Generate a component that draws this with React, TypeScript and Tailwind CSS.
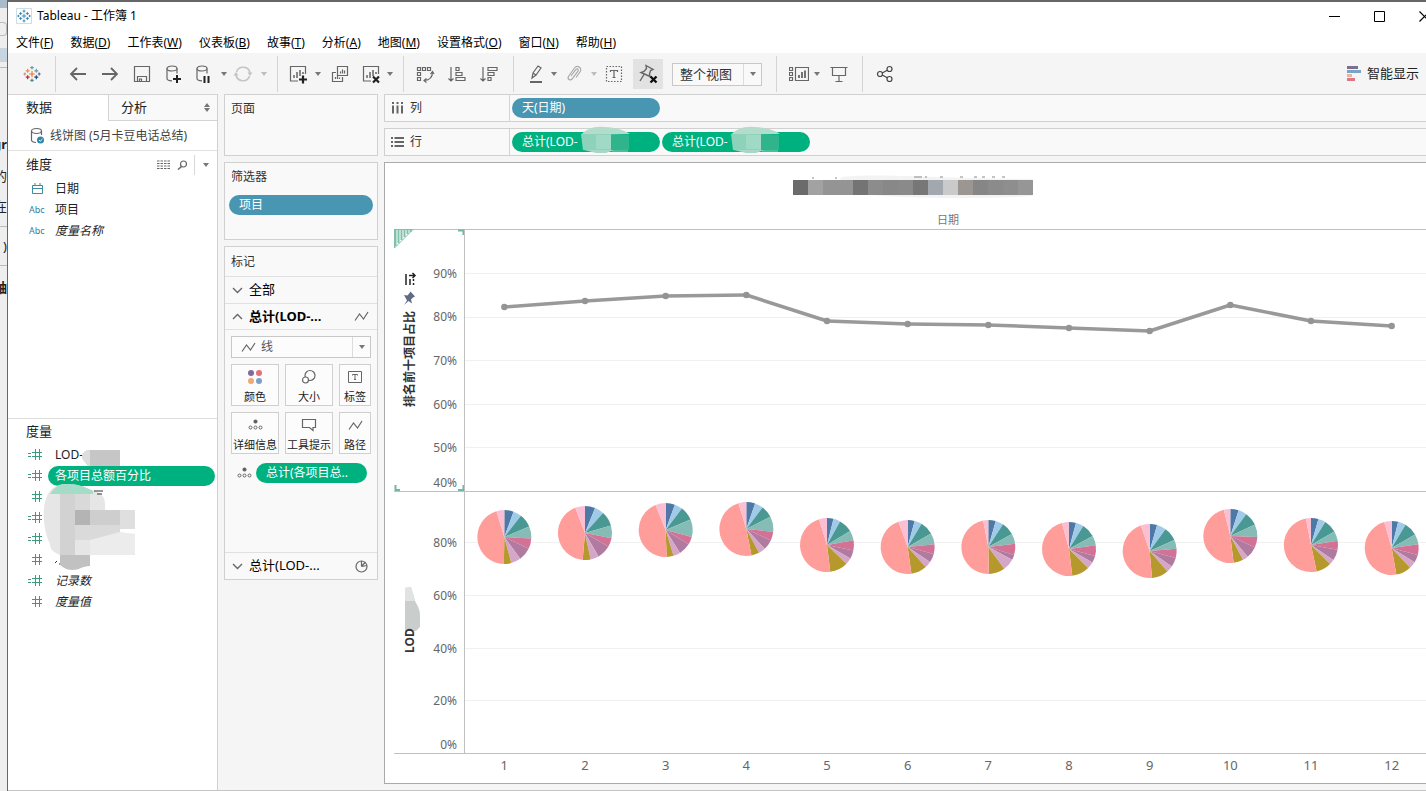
import React from "react";

const SLICE_COLORS = [
  "#4e79a7",
  "#a0cbe8",
  "#499894",
  "#86bcb6",
  "#d37295",
  "#b07aa1",
  "#d4a6c8",
  "#b6992d",
  "#ff9d9a",
  "#fabfd2",
];

const MONTHS = [
  { line: 78, pie: 308, cuts: [20, 38, 67, 93, 116, 144, 165, 181, 343] },
  { line: 72, pie: 304, cuts: [22, 42, 74, 101, 120, 150, 168, 185, 339] },
  { line: 67, pie: 301, cuts: [20, 37, 67, 105, 122, 148, 163, 178, 338] },
  { line: 66, pie: 300, cuts: [19, 37, 63, 96, 115, 137, 152, 169, 343] },
  { line: 92, pie: 316, cuts: [14, 29, 59, 80, 102, 120, 134, 173, 343] },
  { line: 95, pie: 318, cuts: [15, 31, 60, 84, 105, 124, 138, 172, 340] },
  { line: 96, pie: 318, cuts: [16, 33, 61, 83, 107, 118, 144, 179, 349] },
  { line: 99, pie: 320, cuts: [15, 32, 61, 82, 105, 120, 135, 173, 345] },
  { line: 102, pie: 322, cuts: [16, 36, 66, 85, 105, 125, 139, 175, 341] },
  { line: 76, pie: 307, cuts: [18, 36, 65, 92, 115, 140, 152, 173, 346] },
  { line: 92, pie: 316, cuts: [16, 32, 60, 81, 100, 124, 135, 168, 349] },
  { line: 97, pie: 319, cuts: [14, 31, 60, 82, 105, 122, 137, 170, 344] },
];

const UPPER_TICKS = [
  { label: "90%", line: 44, text: 49 },
  { label: "80%", line: 88, text: 92 },
  { label: "70%", line: 131, text: 136 },
  { label: "60%", line: 175, text: 180 },
  { label: "50%", line: 218, text: 223 },
  { label: "40%", line: null, text: 258 },
];

const LOWER_TICKS = [
  { label: "80%", line: 313, text: 318 },
  { label: "60%", line: 366, text: 371 },
  { label: "40%", line: 419, text: 424 },
  { label: "20%", line: 471, text: 476 },
  { label: "0%", line: null, text: 520 },
];

const TICKS = [...UPPER_TICKS, ...LOWER_TICKS];

function columnCenter(i: number) {
  return `${((i + 0.5) / MONTHS.length) * 100}%`;
}

function slicePath(from: number, to: number, r: number) {
  const point = (deg: number) => {
    const a = (deg * Math.PI) / 180;
    return `${(Math.sin(a) * r).toFixed(2)} ${(-Math.cos(a) * r).toFixed(2)}`;
  };
  return `M0 0L${point(from)}A${r} ${r} 0 ${to - from > 180 ? 1 : 0} 1 ${point(to)}Z`;
}

function Pie({ cuts }: { cuts: number[] }) {
  const stops = [0, ...cuts, 360];
  return (
    <g>
      {SLICE_COLORS.map((color, i) => (
        <path key={color} d={slicePath(stops[i], stops[i + 1], 27)} fill={color} />
      ))}
    </g>
  );
}

type IconProps = { w?: number; h?: number; color?: string; children: React.ReactNode };

function Icon({ w = 20, h = 20, color = "#666", children }: IconProps) {
  return (
    <svg
      width={w}
      height={h}
      viewBox={`0 0 ${w} ${h}`}
      fill="none"
      stroke={color}
      strokeWidth="1.2"
      className="shrink-0"
      aria-hidden="true"
    >
      {children}
    </svg>
  );
}

function Caret({ light = false }: { light?: boolean }) {
  return (
    <svg width="6" height="4" viewBox="0 0 6 4" aria-hidden="true">
      <path d="M0 0h6L3 4z" fill={light ? "#bdbdbd" : "#777"} />
    </svg>
  );
}

const LOGO_CROSSES = [
  [10, 10, 3.2, "#e8762c"],
  [5.2, 6.5, 2.2, "#eb912c"],
  [14.8, 6.5, 2.2, "#7099a5"],
  [5.2, 13.5, 2.2, "#c72035"],
  [14.8, 13.5, 2.2, "#1f447e"],
  [10, 3, 2, "#7099a5"],
  [10, 17, 2, "#5b879b"],
  [2, 10, 1.6, "#c98aa0"],
  [18, 10, 1.6, "#5b6591"],
] as const;

function TableauLogo({ size, tint }: { size: number; tint?: string }) {
  return (
    <svg width={size} height={size} viewBox="0 0 20 20" aria-hidden="true">
      {LOGO_CROSSES.map(([x, y, r, c], i) => (
        <path key={i} d={`M${x - r} ${y}h${r * 2}M${x} ${y - r}v${r * 2}`} stroke={tint ?? c} strokeWidth="1.3" />
      ))}
    </svg>
  );
}

function ToolButton({ label, className = "w-8", children }: { label: string; className?: string; children: React.ReactNode }) {
  return (
    <button type="button" aria-label={label} className={`flex h-[30px] shrink-0 items-center justify-center ${className}`}>
      {children}
    </button>
  );
}

function Group({ className, children }: { className: string; children: React.ReactNode }) {
  return <div className={`flex h-9 shrink-0 items-center border-r border-[#d4d4d4] ${className}`}>{children}</div>;
}

const SHEET = (
  <>
    <path d="M10 17H2.500V2.500h15V10" />
    <path d="M6 14v-3M9 14V8M12 12V6M15 10V8" strokeWidth="1.500" />
  </>
);

const DATABASE = (
  <>
    <ellipse cx="8" cy="4.500" rx="5" ry="2.500" />
    <path d="M3 4.500v10c0 1.400 2 2.200 5 2.300M13 4.500v5" />
  </>
);

function Toolbar() {
  return (
    <div className="flex h-[42px] items-center bg-[#f5f5f5]">
      <Group className="w-12 justify-center">
        <ToolButton label="Tableau">
          <TableauLogo size={18} />
        </ToolButton>
      </Group>
      <Group className="pr-[5px] pl-1.5">
        <ToolButton label="后退">
          <Icon>
            <path d="M18 10H3M9 4l-6 6 6 6" strokeWidth="1.800" />
          </Icon>
        </ToolButton>
        <ToolButton label="前进">
          <Icon>
            <path d="M2 10h15M11 4l6 6-6 6" strokeWidth="1.800" />
          </Icon>
        </ToolButton>
        <ToolButton label="保存">
          <Icon>
            <path d="M2.500 2.500h15v15h-15zM5.500 17.500v-5h9v5M7.500 17v-2h2v2" />
          </Icon>
        </ToolButton>
        <ToolButton label="新建数据源">
          <Icon>
            {DATABASE}
            <path d="M9 15h8M13 11v8" stroke="#222" strokeWidth="2" />
          </Icon>
        </ToolButton>
        <ToolButton label="暂停自动更新" className="w-7">
          <Icon>
            {DATABASE}
            <path d="M10.500 12v7M14.500 12v7" stroke="#222" strokeWidth="2" />
          </Icon>
        </ToolButton>
        <ToolButton label="更新选项" className="w-3">
          <Caret />
        </ToolButton>
        <ToolButton label="运行更新" className="w-[26px]">
          <Icon color="#c4c4c4">
            <path d="M3.500 8A7 7 0 0 1 17 9M16.500 12A7 7 0 0 1 3 11" strokeWidth="1.600" />
            <path d="M14.500 8.500h5L17 12zM.5 11.500h5L3 8z" fill="#c4c4c4" stroke="none" />
          </Icon>
        </ToolButton>
        <ToolButton label="运行选项" className="w-4">
          <Caret light />
        </ToolButton>
      </Group>
      <Group className="pr-[7px] pl-1">
        <ToolButton label="新建工作表">
          <Icon>
            {SHEET}
            <path d="M11 15.500h8M15 11.500v8" stroke="#222" strokeWidth="2.200" />
          </Icon>
        </ToolButton>
        <ToolButton label="新建选项" className="w-2">
          <Caret />
        </ToolButton>
        <ToolButton label="复制" className="w-9">
          <Icon>
            <path d="M7.500 2.500h10v9h-10zM6 8.500H2.500v9h10V13" />
            <path d="M10.500 9.500v-2M12.500 9.500v-4M14.500 9.500v-3M5.500 15v-2M7.500 15v-3M9.500 15v-1.500" />
          </Icon>
        </ToolButton>
        <ToolButton label="清除工作表" className="w-[26px]">
          <Icon>
            {SHEET}
            <path d="M12 12.500l6 6M18 12.500l-6 6" stroke="#222" strokeWidth="2.200" />
          </Icon>
        </ToolButton>
        <ToolButton label="清除选项" className="w-3">
          <Caret />
        </ToolButton>
      </Group>
      <Group className="pr-2 pl-[5px]">
        <ToolButton label="交换行和列">
          <Icon>
            <path d="M2.500 3.500h3v3h-3zM7.500 3.500h3v3h-3zM12.500 3.500h3v3h-3zM2.500 8.500h3v3h-3zM2.500 13.500h3v3h-3z" />
            <path d="M17.500 8c0 5-3 8-8 8.500M15.500 10l2-2.500L19 10M11.500 14.500L9 16.500l2.500 2" />
          </Icon>
        </ToolButton>
        <ToolButton label="升序排序">
          <Icon>
            <path d="M4 3v14M1.500 14.500L4 17l2.500-2.500M9 3.500h3v3H9zM9 8.500h6v3H9zM9 13.500h9v3H9z" />
          </Icon>
        </ToolButton>
        <ToolButton label="降序排序">
          <Icon>
            <path d="M4 3v14M1.500 14.500L4 17l2.500-2.500M9 3.500h9v3H9zM9 8.500h6v3H9zM9 13.500h3v3H9z" />
          </Icon>
        </ToolButton>
      </Group>
      <Group className="pr-[14px] pl-2">
        <ToolButton label="突出显示" className="w-7">
          <Icon>
            <path d="M6 14l1-5 5-7 3 2-5 7-4 3zM7 9l3.500 2.500" />
            <path d="M4 18h12" strokeWidth="2" />
          </Icon>
        </ToolButton>
        <ToolButton label="突出显示选项" className="w-2">
          <Caret />
        </ToolButton>
        <ToolButton label="组成员">
          <Icon color="#aaa">
            <path d="M7 12l5-6.500c1-1.200 3 .2 2 1.600L8 15c-1.800 2-5-.1-3.500-2.500l6-8.500c2.500-3.300 8-.2 5.800 3.500L12 13.500" />
          </Icon>
        </ToolButton>
        <ToolButton label="组选项" className="w-2">
          <Caret light />
        </ToolButton>
        <ToolButton label="显示标记标签">
          <Icon>
            <path d="M2.500 2.500h15v15h-15z" strokeDasharray="1.500 1.500" />
            <path d="M6.500 8V6.500h7V8M10 6.500v7M8.500 13.500h3" />
          </Icon>
        </ToolButton>
        <ToolButton label="固定轴" className="ml-[3px] w-[30px] bg-[#e2e2e2]">
          <Icon>
            <path d="M8 1.500l7 4-2.500 1-1 3.500.5 2.500L3 8.500l3-1 2.500-3zM6 10.500L2 17" strokeWidth="1.400" />
            <path d="M12.500 12.500l6 6M18.500 12.500l-6 6" stroke="#111" strokeWidth="2.400" />
          </Icon>
        </ToolButton>
        <div className="relative ml-[9px] flex w-[90px]">
          <select
            aria-label="适合"
            className="h-[23px] w-full appearance-none border border-[#c8c8c8] bg-[#f9f9f9] pb-0.5 pl-[7px] text-[13px] leading-5 text-[#333]"
          >
            <option>整个视图</option>
          </select>
          <span className="pointer-events-none absolute inset-y-px right-px flex w-[18px] items-center justify-center border-l border-[#dcdcdc]">
            <Caret />
          </span>
        </div>
      </Group>
      <Group className="pr-[5px] pl-2">
        <ToolButton label="显示/隐藏卡" className="w-7">
          <Icon>
            <path d="M.5 3.500h3v3h-3zM.5 8.500h3v3h-3zM.5 13.500h3v3h-3zM6.500 3.500h13v13h-13z" />
            <path d="M10 14v-3M13 14V8M16 14V6.500" strokeWidth="1.800" />
          </Icon>
        </ToolButton>
        <ToolButton label="卡选项" className="w-2">
          <Caret />
        </ToolButton>
        <ToolButton label="演示模式" className="w-9">
          <Icon>
            <path d="M1.500 3.500h17M3.500 3.500v8h13v-8M10 11.500v6M6.500 17.500h7" />
          </Icon>
        </ToolButton>
      </Group>
      <ToolButton label="共享" className="ml-1.5 w-8">
        <Icon color="#444">
          <circle cx="5" cy="10" r="2.500" />
          <circle cx="14.500" cy="5" r="2.500" />
          <circle cx="14.500" cy="15" r="2.500" />
          <path d="M7.200 9L12.300 6.200M7.200 11l5.100 2.800" />
        </Icon>
      </ToolButton>
      <button type="button" className="mr-[7px] ml-auto flex items-center gap-1.5 text-[13px] whitespace-nowrap text-[#222]">
        <svg width="14" height="16" viewBox="0 0 14 16" aria-hidden="true">
          <path d="M0 0h11v3H0z" fill="#7b6f94" />
          <path d="M0 4h14v3H0z" fill="#7ba3c4" />
          <path d="M0 8h5v3H0z" fill="#e8b49a" />
          <path d="M0 12h8v3H0z" fill="#e07684" />
        </svg>
        智能显示
      </button>
    </div>
  );
}

const MENUS = [
  ["文件", "F"],
  ["数据", "D"],
  ["工作表", "W"],
  ["仪表板", "B"],
  ["故事", "T"],
  ["分析", "A"],
  ["地图", "M"],
  ["设置格式", "O"],
  ["窗口", "N"],
  ["帮助", "H"],
];

function TitleBar() {
  return (
    <header className="bg-white text-black">
      <div className="flex h-7 items-center overflow-hidden">
        <span className="ml-2 flex size-4 items-center justify-center border border-[#cfdfe8]">
          <TableauLogo size={14} tint="#2d84b5" />
        </span>
        <h1 className="ml-[5px] text-xs">Tableau - 工作簿 1</h1>
        <div className="-mr-1 ml-auto flex items-center gap-[34px]">
          <button type="button" aria-label="最小化">
            <Icon w={11} h={11} color="#000">
              <path d="M0 5.500h11" strokeWidth="1" />
            </Icon>
          </button>
          <button type="button" aria-label="最大化">
            <Icon w={11} h={11} color="#000">
              <path d="M.5.5h10v10H.5z" strokeWidth="1" />
            </Icon>
          </button>
          <button type="button" aria-label="关闭">
            <Icon w={11} h={11} color="#000">
              <path d="M.5.5l10 10M10.500.5l-10 10" strokeWidth="1.200" />
            </Icon>
          </button>
        </div>
      </div>
      <nav className="flex h-[23px] items-center gap-[17px] pt-0.5 pl-2 text-xs">
        {MENUS.map(([name, key]) => (
          <button key={name} type="button" className="whitespace-nowrap">
            {name}(<u>{key}</u>)
          </button>
        ))}
      </nav>
    </header>
  );
}

function HashIcon({ calc }: { calc: boolean }) {
  return (
    <Icon w={14} h={11} color="#3d9b7d">
      {calc && <path d="M0 4.500h3M0 7.500h3" />}
      <path d="M4 3.500h10M4 7.500h10M7.500 0v11M11.500 0v11" strokeWidth="1" />
    </Icon>
  );
}

const MEASURES = [
  { name: "LOD-", calc: true },
  { name: "各项目总额百分比", calc: true, selected: true },
  { name: "", calc: false },
  { name: "", calc: true },
  { name: "", calc: true },
  { name: "", calc: false },
  { name: "记录数", calc: true, italic: true },
  { name: "度量值", calc: false, italic: true },
];

function MeasureMask() {
  return (
    <svg className="absolute top-[29px] left-[34px]" width="96" height="124" viewBox="0 0 96 124" aria-hidden="true">
      <path d="M48 2h30v16H46l-6-8c0-5 3-8 8-8z" fill="#c6c6c6" />
      <path d="M48 2v16h-2l-6-8c0-5 3-8 8-8z" fill="#dedede" />
      <path d="M5 48C8 40 16 36 24 36c12 0 18 3 26 6 8 2 13 6 13 14v51H18C10 104 8 100 8 96 2 84-1 62 5 48z" fill="#e6e6e6" />
      <path d="M8 46c4-7 10-10 17-10 12 0 18 3 26 7v3z" fill="#a5dcc8" />
      <path d="M18 46h15v61H18z" fill="#d2d2d2" />
      <path d="M33 46h15v16H33z" fill="#d9d9d9" />
      <path d="M33 62h15v15H33z" fill="#b4b4b4" />
      <path d="M48 62h30v15H48z" fill="#cecece" />
      <path d="M78 62h15v19H78z" fill="#dfdfdf" />
      <path d="M33 77h45v8L48 92H33z" fill="#dadada" />
      <path d="M48 92l30-8 15 2v21H48z" fill="#ececec" />
      <path d="M18 107h30v11c-8 0-10 4-18 4-6 0-9-3-12-5z" fill="#c1c1c1" />
      <path d="M52 43h9M55 46h5" stroke="#333" />
      <path d="M13 115l2-2M17 116h1" stroke="#333" />
    </svg>
  );
}

function DataPane() {
  return (
    <aside className="flex w-[210px] shrink-0 flex-col border-r border-[#d0d0d0] bg-white text-xs text-[#222]">
      <div role="tablist" className="flex h-[27px] shrink-0 text-[13px]">
        <button type="button" role="tab" aria-selected="true" className="w-[100px] border-t border-[#d4d4d4] pl-[18px] text-left">
          数据
        </button>
        <button
          type="button"
          role="tab"
          aria-selected="false"
          className="flex flex-1 items-center justify-between border border-r-0 border-[#d4d4d4] bg-[#f9f9f9] pr-[7px] pl-3"
        >
          分析
          <svg width="6" height="9" viewBox="0 0 6 9" aria-hidden="true">
            <path d="M0 4l3-4 3 4zM0 5h6L3 9z" fill="#777" />
          </svg>
        </button>
      </div>
      <button type="button" className="flex h-[30px] shrink-0 items-center gap-[3px] border-b border-[#e2e2e2] pl-[22px] whitespace-nowrap text-[#444]">
        <Icon w={17} h={18}>
          <ellipse cx="6.500" cy="4" rx="5" ry="2.500" />
          <path d="M1.500 4v9c0 1.500 2 2.300 4.500 2.500M11.500 4v4" />
          <circle cx="10.500" cy="13" r="3.500" fill="#2f87a8" stroke="none" />
          <path d="M9 13l1.200 1.200L12.500 12" stroke="#fff" strokeWidth="1" />
        </Icon>
        线饼图 (5月卡豆电话总结)
      </button>
      <section className="h-[268px] shrink-0 border-b border-[#dedede]">
        <div className="flex h-[27px] items-center pt-px pl-[18px]">
          <h2 className="text-[13px]">维度</h2>
          <button type="button" aria-label="查看数据" className="ml-auto">
            <Icon w={13} h={10}>
              <path d="M0 1h13M0 3.500h13M0 6h13M0 8.500h13" strokeDasharray="2.500 1" strokeWidth="1" />
            </Icon>
          </button>
          <button type="button" aria-label="查找字段" className="ml-[7px]">
            <Icon w={11} h={10}>
              <circle cx="6.500" cy="4" r="3" />
              <path d="M4.500 6.500L1 9.500" strokeWidth="1.500" />
            </Icon>
          </button>
          <button type="button" aria-label="维度选项" className="ml-[6px] flex h-5 w-[23px] items-center justify-center border-l border-[#d8d8d8]">
            <Caret />
          </button>
        </div>
        <ul>
          <li className="flex h-[21px] items-center">
            <span className="flex w-[47px] justify-center pl-[11px]">
              <Icon w={11} h={11} color="#3f89a6">
                <path d="M.5 2.500h10v8H.5zM.5 5.500h10M3 0v3M8 0v3" strokeWidth="1" />
              </Icon>
            </span>
            日期
          </li>
          <li className="flex h-[21px] items-center">
            <span className="w-[47px] pl-[21px] text-[9px] text-[#2f7f9f]">Abc</span>
            项目
          </li>
          <li className="flex h-[21px] items-center">
            <span className="w-[47px] pl-[21px] text-[9px] text-[#2f7f9f]">Abc</span>
            <span className="italic">度量名称</span>
          </li>
        </ul>
      </section>
      <section className="relative flex-1 pb-4">
        <h2 className="flex h-[25px] items-center pl-[18px] text-[13px]">度量</h2>
        <ul>
          {MEASURES.map((m, i) => (
            <li key={i} className="flex h-[21px] items-center pr-[2px]">
              <span className="flex w-10 shrink-0 justify-end pr-[6px]">
                <HashIcon calc={m.calc} />
              </span>
              <span
                className={
                  m.selected
                    ? "flex-1 rounded-full bg-[#00b180] pl-[7px] leading-5 text-white"
                    : m.italic
                      ? "pl-[7px] italic"
                      : "pl-[7px]"
                }
              >
                {m.name}
              </span>
            </li>
          ))}
        </ul>
        <MeasureMask />
      </section>
    </aside>
  );
}

function TrendIcon() {
  return (
    <Icon w={15} h={11}>
      <path d="M1 9.500L5.500 3l4 5L14 1" />
    </Icon>
  );
}

function DetailIcon() {
  return (
    <Icon w={15} h={12}>
      <circle cx="7.500" cy="2.500" r="1.500" fill="#555" />
      <circle cx="2.500" cy="8.500" r="1.500" strokeWidth="1" />
      <circle cx="7.500" cy="8.500" r="1.500" strokeWidth="1" />
      <circle cx="12.500" cy="8.500" r="1.500" strokeWidth="1" />
    </Icon>
  );
}

function MarkButton({ label, children }: { label: string; children: React.ReactNode }) {
  return (
    <button
      type="button"
      className="flex h-[42px] min-w-0 flex-col items-center justify-between overflow-hidden border border-[#cfcfcf] bg-[#fcfcfc] pt-1 text-[11px] leading-4 whitespace-nowrap text-[#222]"
    >
      <span className="flex h-4 items-center">{children}</span>
      {label}
    </button>
  );
}

function Chevron({ up = false }: { up?: boolean }) {
  return (
    <Icon w={11} h={7}>
      <path d={up ? "M1 6l4.500-4.500L10 6" : "M1 1l4.500 4.500L10 1"} strokeWidth="1.400" />
    </Icon>
  );
}

function Cards() {
  return (
    <div className="flex w-[154px] shrink-0 flex-col gap-1.5 text-xs text-[#333]">
      <section className="h-[62px] border border-[#d0d0d0] bg-[#f9f9f9] px-1.5 pt-1.5">
        <h2>页面</h2>
      </section>
      <section className="h-[78px] border border-[#d0d0d0] bg-[#f9f9f9] px-1 pt-1.5">
        <h2 className="pl-0.5">筛选器</h2>
        <button type="button" className="mt-2.5 block h-5 w-full rounded-full bg-[#4996b2] pl-2.5 text-left text-white">
          项目
        </button>
      </section>
      <section className="flex h-[334px] flex-col border border-[#d0d0d0] bg-[#f9f9f9]">
        <h2 className="flex h-[30px] items-center border-b border-[#e0e0e0] pl-1.5">标记</h2>
        <button type="button" className="flex h-[27px] items-center gap-1.5 border-b border-[#e0e0e0] pl-[7px] text-[13px] text-black">
          <Chevron />
          全部
        </button>
        <button
          type="button"
          className="flex h-[26px] items-center gap-1.5 border-b border-[#e0e0e0] pr-2 pl-[7px] text-[13px] font-bold text-black"
        >
          <Chevron up />
          总计(LOD-...
          <span className="ml-auto">
            <TrendIcon />
          </span>
        </button>
        <div className="flex flex-1 flex-col gap-1.5 px-1.5 pt-1.5">
          <div className="relative flex">
            <span className="pointer-events-none absolute inset-y-0 left-2.5 flex items-center">
              <TrendIcon />
            </span>
            <select
              aria-label="标记类型"
              className="h-[22px] w-full appearance-none border border-[#c8c8c8] bg-[#fcfcfc] pl-[29px] text-xs leading-4 text-[#555]"
            >
              <option>线</option>
            </select>
            <span className="pointer-events-none absolute inset-y-px right-px flex w-[18px] items-center justify-center border-l border-[#dcdcdc]">
              <Caret />
            </span>
          </div>
          <div className="grid grid-cols-[3fr_3fr_2fr] gap-1.5">
            <MarkButton label="颜色">
              <svg width="16" height="16" viewBox="0 0 16 16" aria-hidden="true">
                <circle cx="4" cy="4" r="3" fill="#806a9c" />
                <circle cx="12" cy="4" r="3" fill="#e57079" />
                <circle cx="4" cy="12" r="3" fill="#f0a972" />
                <circle cx="12" cy="12" r="3" fill="#7ba0c8" />
              </svg>
            </MarkButton>
            <MarkButton label="大小">
              <Icon w={16} h={16}>
                <circle cx="9" cy="6.500" r="5" />
                <circle cx="4.500" cy="11" r="3" fill="#fff" />
              </Icon>
            </MarkButton>
            <MarkButton label="标签">
              <Icon w={14} h={14}>
                <path d="M.5 1.500h13v11H.5zM4.500 5.500v-1h5v1M7 4.500v5M6 9.500h2" strokeWidth="1" />
              </Icon>
            </MarkButton>
            <MarkButton label="详细信息">
              <DetailIcon />
            </MarkButton>
            <MarkButton label="工具提示">
              <Icon w={16} h={14}>
                <path d="M1.500 1.500h13v8h-2.500v3l-3.500-3h-7z" />
              </Icon>
            </MarkButton>
            <MarkButton label="路径">
              <TrendIcon />
            </MarkButton>
          </div>
          <div className="flex items-center gap-1 pt-[3px] pl-1.5">
            <DetailIcon />
            <button type="button" className="mr-1 h-5 flex-1 rounded-full bg-[#00b180] pl-2.5 text-left whitespace-nowrap text-white">
              总计(各项目总..
            </button>
          </div>
        </div>
        <button type="button" className="flex h-[27px] items-center gap-1.5 border-t border-[#e0e0e0] pr-2 pl-[7px] text-[13px] text-black">
          <Chevron />
          总计(LOD-...
          <span className="ml-auto">
            <Icon w={15} h={15}>
              <circle cx="7.500" cy="7.500" r="5.500" />
              <path d="M7.500 7.500V2M7.500 7.500L11 3.500M7.500 7.500L13 6.500" />
            </Icon>
          </span>
        </button>
      </section>
    </div>
  );
}

function LodPill() {
  return (
    <button type="button" className="relative h-5 w-[148px] rounded-full bg-[#00b180] pl-2.5 text-left text-white">
      总计(LOD-
      <svg className="absolute -top-1.5 left-[68px]" width="52" height="28" viewBox="0 0 52 28" aria-hidden="true">
        <path d="M1 9C6 3 14 0 24 1c10 0 20 3 26 7z" fill="#b3dccd" />
        <path d="M1 8h30v16H3z" fill="#8dd3bb" />
        <path d="M16 9h15v14H16z" fill="#a0d9c5" />
        <path d="M31 9h18v15H31z" fill="#2fb48c" />
        <path d="M4 24h30l-8 3H16z" fill="#a5d8c6" />
        <path d="M32 25h16" stroke="#8fcdb8" />
      </svg>
    </button>
  );
}

function Shelf({ label, icon, children }: { label: string; icon: React.ReactNode; children: React.ReactNode }) {
  return (
    <div className="flex h-7 border border-r-0 border-[#d0d0d0] bg-[#f9f9f9] text-xs text-[#333]">
      <div className="flex w-[125px] shrink-0 items-center gap-1.5 border-r border-[#d4d4d4] pl-1.5">
        {icon}
        {label}
      </div>
      <div className="flex items-center gap-[2px] pl-[2px]">{children}</div>
    </div>
  );
}

function Viz() {
  return (
    <section className="overflow-hidden border border-r-0 border-[#aaa] bg-white pb-1.5">
      <div className="-mr-1.5 pl-[9px]">
        <div className="flex h-12 justify-center pt-[11px]">
          <svg width="242" height="28" viewBox="0 0 242 28" aria-hidden="true">
            <path d="M50 3c40-4 80 1 190 2v17c-60 4-130 2-160-1L40 14z" fill="#f3f3f3" />
            {[
              "#6b6b6b", "#a2a2a2", "#949494", "#949494", "#747474", "#8c8c8c", "#888", "#8a8a8a",
              "#777", "#a2a8ad", "#cacaca", "#9c9692", "#868686", "#8b8b8b", "#8e8e8e", "#969696",
            ].map((c, i) => (
              <path key={i} d={`M${1 + i * 15} 6h15v15h-15z`} fill={c} />
            ))}
            <path d="M20 4h2M43 4h2M122 3h8M133 3h2M148 3h3M168 3h3M182 3h3M190 3h3M200 3h3M210 3h3" stroke="#888" />
          </svg>
        </div>
        <div className="h-[18px] pl-[70px] text-center text-[11px] leading-[18px] text-[#777]">日期</div>
        <div className="flex">
          <svg
            width="70"
            height="525"
            viewBox="0 0 70 525"
            className="shrink-0 text-xs"
            role="img"
            aria-label="纵轴"
            fill="#666"
          >
            {TICKS.map((t) => (
              <text key={t.text} x="63" y={t.text} textAnchor="end">
                {t.label}
              </text>
            ))}
            <path d="M0 .5h70M0 262.500h70M0 524.500h70" stroke="#c0c0c0" />
            <path d="M1.500 0v17M4.500 0v14M7.500 0v11M10.500 0v8M13.500 0v5M16.500 0v3" stroke="#7fc0aa" strokeWidth="2" />
            <path d="M.5 19L19 .5H.5z" stroke="#7fc0aa" fill="none" />
            <path d="M64 1.500h5.500V6M1.500 256v5H6M69.500 256v5H64" stroke="#70b8a2" strokeWidth="2" fill="none" />
            <text transform="translate(20 178) rotate(-90)" className="font-bold" fill="#333">
              排名前十项目占比
            </text>
            <path d="M10 66l3.500.5 2-2.500 1-1.500 4.500 5-2 1-2 2 1 4-3.500-2.500L10 76l3-4.500z" fill="#5f6b85" />
            <path
              d="M12 45v11M16 50v6M19.500 50v2M19.500 54v2M15 46.500h5.500M18.500 44l2.500 2.500-2.500 2.500"
              stroke="#222"
              strokeWidth="1.500"
              fill="none"
            />
            <path d="M11 359l6-1 4 14c2 4 5 8 5 14v12l-4 4H11z" fill="#c9cecc" />
            <path d="M11 359l6-1 4 14H11z" fill="#e0e3e2" />
            <text transform="translate(20 424) rotate(-90)" className="font-bold" fill="#333">
              LOD
            </text>
          </svg>
          <svg width="100%" height="525" className="min-w-0 flex-1" role="img" aria-label="每日占比折线图与饼图">
            {TICKS.map(
              (t) =>
                t.line !== null && <line key={t.line} x1="0" x2="100%" y1={t.line + 0.5} y2={t.line + 0.5} stroke="#f0f0f0" />,
            )}
            <line x1="0" x2="100%" y1="0.5" y2="0.5" stroke="#c0c0c0" />
            <line x1="0" x2="100%" y1="262.5" y2="262.5" stroke="#c0c0c0" />
            <line x1="0" x2="100%" y1="524.5" y2="524.5" stroke="#c0c0c0" />
            <line x1="0.5" x2="0.5" y1="0" y2="525" stroke="#c0c0c0" />
            {MONTHS.slice(1).map((m, i) => (
              <line
                key={i}
                x1={columnCenter(i)}
                y1={MONTHS[i].line}
                x2={columnCenter(i + 1)}
                y2={m.line}
                stroke="#999"
                strokeWidth="3.5"
                strokeLinecap="round"
              />
            ))}
            {MONTHS.map((m, i) => (
              <g key={i}>
                <circle cx={columnCenter(i)} cy={m.line} r="3.2" fill="#949494" />
                <svg x={columnCenter(i)} y={m.pie} overflow="visible">
                  <Pie cuts={m.cuts} />
                </svg>
              </g>
            ))}
          </svg>
        </div>
        <div className="grid grid-cols-12 pl-[70px] text-center text-[13px] leading-[23px] text-[#666]">
          {MONTHS.map((_, i) => (
            <span key={i}>{i + 1}</span>
          ))}
        </div>
      </div>
    </section>
  );
}

function BackdropStrip() {
  return (
    <div
      aria-hidden="true"
      className="flex w-2 shrink-0 flex-col items-end overflow-hidden border-r border-[#666] bg-[#eee] text-[13px] leading-5 whitespace-nowrap text-[#222]"
    >
      <div className="h-2 w-full bg-[#a9bccb]" />
      <div className="mt-[14px] h-[14px] w-full rounded-r border border-l-0 border-[#bbb]" />
      <div className="mt-3 h-[14px] w-full bg-[#c8d4de]" />
      <div className="mt-[5px] w-full border-t border-[#bbb]" />
      <div className="mt-[66px] font-bold">gr</div>
      <div className="mt-3">的</div>
      <div className="mt-2.5">在</div>
      <div className="mt-2.5 w-full border-t border-[#bbb]" />
      <div className="mt-[9px]">)</div>
      <div className="mt-[9px] w-full border-t border-[#bbb]" />
      <div className="mt-[11px] font-bold">轴</div>
    </div>
  );
}

export default function App() {
  return (
    <div className="flex min-h-screen overflow-hidden bg-[#f5f5f5] font-['Noto_Sans','Noto_Sans_CJK_SC',sans-serif]">
      <BackdropStrip />
      <div className="flex min-w-0 flex-1 flex-col border-t-2 border-b border-t-[#666] border-b-[#c4c4c4]">
        <TitleBar />
        <Toolbar />
        <main className="-mt-px flex flex-1">
          <DataPane />
          <div className="flex min-w-0 flex-1 gap-1.5 pl-1.5">
            <Cards />
            <div className="flex min-w-0 flex-1 flex-col gap-1.5">
              <Shelf
                label="列"
                icon={
                  <Icon w={13} h={12}>
                    <path d="M2 0v2M6.500 0v2M11 0v2M2 3.500v8M6.500 3.500v8M11 3.500v8" strokeWidth="2" />
                  </Icon>
                }
              >
                <button type="button" className="h-5 w-[148px] rounded-full bg-[#4996b2] pl-2.5 text-left text-white">
                  天(日期)
                </button>
              </Shelf>
              <Shelf
                label="行"
                icon={
                  <Icon w={13} h={12}>
                    <path d="M0 2h2M0 6h2M0 10h2M3.500 2H13M3.500 6H13M3.500 10H13" strokeWidth="2" />
                  </Icon>
                }
              >
                <LodPill />
                <LodPill />
              </Shelf>
              <Viz />
            </div>
          </div>
        </main>
      </div>
    </div>
  );
}
